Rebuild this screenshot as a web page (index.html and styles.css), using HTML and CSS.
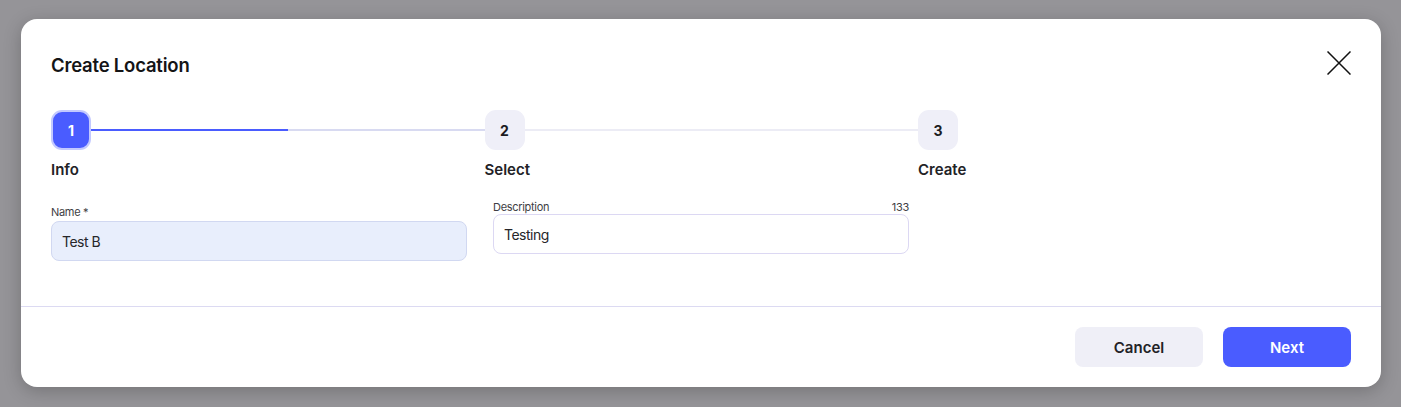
FILE: index.html
```html
<!DOCTYPE html>
<html>
<head>
<meta charset="utf-8">
<link rel="stylesheet" href="styles.css">
</head>
<body>
<div class="overlay">
  <div class="modal">
    <div class="modal-body">
      <div class="header">
        <h2 class="title">Create Location</h2>
        <button class="close" aria-label="Close">
          <svg width="24" height="24" viewBox="0 0 24 24"><path d="M0.5 0.5L23.5 23.5M23.5 0.5L0.5 23.5" stroke="#111" stroke-width="1.5" fill="none"/></svg>
        </button>
      </div>
      <div class="stepper">
        <div class="step">
          <div class="step-track">
            <div class="step-dot active">1</div>
            <div class="step-line"><div class="step-progress" style="width:50%"></div></div>
          </div>
          <div class="step-label">Info</div>
        </div>
        <div class="step">
          <div class="step-track">
            <div class="step-dot">2</div>
            <div class="step-line light"></div>
          </div>
          <div class="step-label">Select</div>
        </div>
        <div class="step">
          <div class="step-track">
            <div class="step-dot">3</div>
          </div>
          <div class="step-label">Create</div>
        </div>
      </div>
      <div class="fields">
        <div class="field field-name">
          <div class="field-label">Name *</div>
          <div class="input filled">Test B</div>
        </div>
        <div class="field">
          <div class="field-label"><span>Description</span><span>133</span></div>
          <div class="input">Testing</div>
        </div>
      </div>
    </div>
    <div class="footer">
      <button class="btn btn-secondary">Cancel</button>
      <button class="btn btn-primary">Next</button>
    </div>
  </div>
</div>
</body>
</html>
```

FILE: styles.css
```css
* { box-sizing: border-box; }
html, body { margin: 0; padding: 0; }
body {
  width: 1401px;
  height: 407px;
  background: #959498;
  font-family: Inter, "Noto Sans", sans-serif;
  color: #1c1c1f;
  overflow: hidden;
}
.overlay {
  padding: 19px 20px 20px 21px;
}
.modal {
  width: 1360px;
  height: 368px;
  background: #fff;
  border-radius: 16px;
  box-shadow: 0 4px 18px rgba(0,0,0,0.22);
  display: flex;
  flex-direction: column;
}
.modal-body {
  padding: 29px 30px 0 30px;
  flex: 1;
  border-bottom: 1px solid #dcdaf2;
}
.header {
  display: flex;
  justify-content: space-between;
  align-items: center;
  height: 34px;
}
.title {
  margin: 0;
  font-size: 18.5px;
  font-weight: 600;
  letter-spacing: -0.2px;
  color: #141416;
}
.close {
  border: 0;
  background: none;
  padding: 0;
  width: 24px;
  height: 24px;
  margin-top: -5px;
  display: flex;
}
.stepper {
  margin-top: 28px;
  display: grid;
  grid-template-columns: 433.5px 433.5px 1fr;
}
.step-track {
  display: flex;
  align-items: center;
}
.step-dot {
  width: 40px;
  height: 40px;
  flex: none;
  border-radius: 11px;
  background: #efeff8;
  display: flex;
  align-items: center;
  justify-content: center;
  font-size: 14px;
  font-weight: 700;
  color: #1c1c1f;
}
.step-dot.active {
  background: #4a5cff;
  color: #fff;
  border: 2px solid #c3c9ff;
}
.step-line {
  flex: 1;
  height: 2px;
  background: #d8daf1;
}
.step-line.light { background: #ececf5; }
.step-progress {
  height: 2px;
  background: #4a5cff;
}
.step-label {
  margin-top: 10px;
  font-size: 15px;
  line-height: 20px;
  font-weight: 600;
  color: #222226;
}
.fields {
  margin-top: 20px;
  display: flex;
  gap: 26px;
  align-items: flex-start;
}
.field { width: 416px; }
.field-name { margin-top: 5px; }
.field-name .field-label { margin-bottom: 2px; }
.field-label {
  font-size: 11px;
  line-height: 14px;
  letter-spacing: -0.3px;
  color: #3e3e44;
  display: flex;
  justify-content: space-between;
}
.input {
  height: 40px;
  border: 1px solid #dcd8f3;
  border-radius: 8px;
  padding: 0 10px;
  font-size: 14px;
  letter-spacing: -0.5px;
  display: flex;
  align-items: center;
  color: #26262a;
}
.input.filled {
  background: #e8eefc;
  border-color: #d1d8f1;
}
.footer {
  height: 80px;
  display: flex;
  justify-content: flex-end;
  align-items: center;
  gap: 20px;
  padding: 0 30px;
}
.btn {
  width: 128px;
  height: 40px;
  border: 0;
  border-radius: 8px;
  font-family: Inter, "Noto Sans", sans-serif;
  font-size: 15px;
  font-weight: 600;
}
.btn-secondary { background: #efeff7; color: #222226; }
.btn-primary { background: #4a5cff; color: #fff; }
```
